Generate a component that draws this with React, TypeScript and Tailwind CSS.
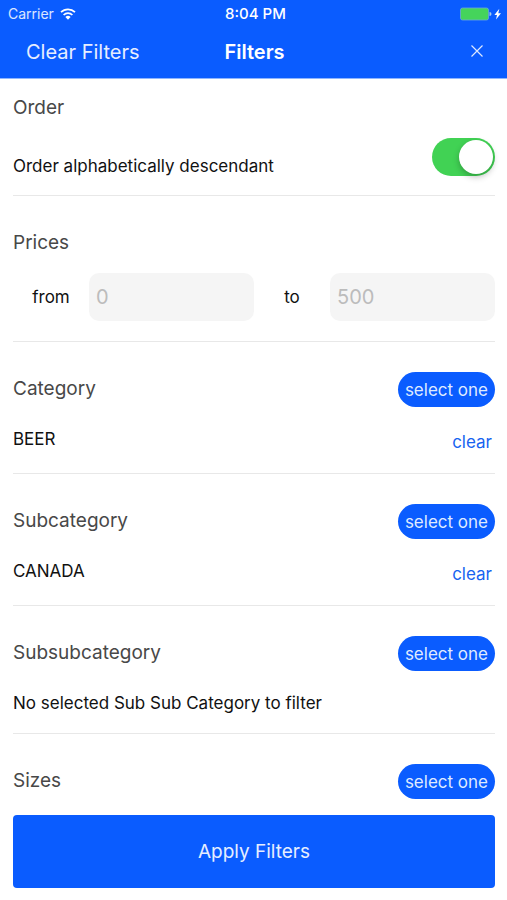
import { useState } from "react";
import type { ReactNode } from "react";

function StatusBar() {
  return (
    <div className="grid h-7 grid-cols-3 items-center pr-1 pl-2 leading-4">
      <div className="flex items-center gap-1.5 text-white/85">
        <span className="text-sm leading-4">Carrier</span>
        <svg width="16" height="12" viewBox="0 0 16 12" fill="none" stroke="#fff" strokeWidth="1.7" aria-hidden="true">
          <path d="M1 4.2a10 10 0 0 1 14 0" />
          <path d="M3.6 7a6.2 6.2 0 0 1 8.8 0" />
          <path d="M8 11.8 5.4 9.1a3.7 3.7 0 0 1 5.2 0Z" fill="#fff" stroke="none" />
        </svg>
      </div>
      <span className="text-center text-[15px] leading-4 font-medium">8:04 PM</span>
      <svg className="justify-self-end" width="43" height="14" viewBox="0 0 43 14" aria-hidden="true">
        <rect x="0.5" y="1" width="28" height="12" rx="2" fill="#45d45b" stroke="#6aa8d8" strokeWidth="0.8" />
        <path d="M29.5 5a2 2 0 0 1 0 4Z" fill="#a9cbe8" />
        <path d="M39.3 1.8 34.4 8h2.6l-1 4.4L41 6.2h-2.7Z" fill="#fff" />
      </svg>
    </div>
  );
}

function Section({ title, action, children }: { title: string; action?: ReactNode; children?: ReactNode }) {
  return (
    <section className="border-b border-[#e8e8e8] pt-[30px] first:pt-3 last:border-b-0">
      <div className="flex h-[35px] items-center justify-between">
        <h2 className="pb-0.5 text-[19px] leading-6 text-[#484848]">{title}</h2>
        {action}
      </div>
      {children}
    </section>
  );
}

function SelectButton({ label }: { label: string }) {
  return (
    <button
      type="button"
      aria-label={`${label}: select one`}
      className="h-[35px] rounded-full bg-[#0a5cff] px-[7px] text-[17px] leading-6 text-[#dfeaff]"
    >
      select one
    </button>
  );
}

function PriceField({ id, label, placeholder }: { id: string; label: string; placeholder: string }) {
  return (
    <div className="flex flex-1 items-center">
      <label htmlFor={id} className="w-[76px] text-center text-[17px] leading-6">
        {label}
      </label>
      <input
        id={id}
        inputMode="numeric"
        placeholder={placeholder}
        className="h-12 w-0 flex-1 rounded-[10px] bg-[#f5f5f5] px-[7px] text-xl outline-none placeholder:text-[#bcbcbc]"
      />
    </div>
  );
}

function SelectedSection({ title, initial }: { title: string; initial: string }) {
  const [value, setValue] = useState(initial);
  return (
    <Section title={title} action={<SelectButton label={title} />}>
      <div className="mt-5 mb-[19px] flex h-[27px] items-start justify-between">
        <span className="text-[17px] leading-6">{value}</span>
        <button
          type="button"
          onClick={() => setValue("")}
          className="self-end px-[3px] text-[17px] leading-6 text-[#1763f0]"
        >
          clear
        </button>
      </div>
    </Section>
  );
}

export default function App() {
  const [descending, setDescending] = useState(true);
  return (
    <div className="flex min-h-screen flex-col bg-white font-['Inter','Liberation_Sans',sans-serif] text-[#111]">
      <header className="border-b border-[#8fb6ff] bg-[#0a5cff] text-white">
        <StatusBar />
        <nav className="grid h-[50px] grid-cols-[1fr_auto_1fr] items-center pr-6 pb-0.5 pl-[26px]">
          <button type="button" className="justify-self-start text-xl leading-6 text-[#e6eeff]">
            Clear Filters
          </button>
          <h1 className="text-xl leading-6 font-semibold">Filters</h1>
          <button type="button" aria-label="Close" className="justify-self-end pb-0.5">
            <svg width="12" height="12" viewBox="0 0 12 12" stroke="#dce8ff" strokeWidth="1.2" aria-hidden="true">
              <path d="M0.5 0.5l11 11M11.5 0.5l-11 11" />
            </svg>
          </button>
        </nav>
      </header>

      <main className="flex-1 pr-3 pl-[13px]">
        <Section title="Order">
          <div className="mt-3 mb-[19px] flex h-[38px] items-start justify-between">
            <label htmlFor="descending" className="pt-4 text-[17px] leading-6">
              Order alphabetically descendant
            </label>
            <input
              id="descending"
              type="checkbox"
              role="switch"
              checked={descending}
              onChange={(e) => setDescending(e.target.checked)}
              className="h-[38px] w-[63px] appearance-none rounded-full bg-[#d8d8d8] p-0.5 before:block before:size-[34px] before:rounded-full before:bg-white before:shadow-[0_3px_6px_rgba(0,0,0,0.25)] before:content-[''] checked:bg-[#41d254] checked:before:ml-[25px]"
            />
          </div>
        </Section>

        <Section title="Prices">
          <div className="mt-3 mb-5 flex">
            <PriceField id="price-from" label="from" placeholder="0" />
            <PriceField id="price-to" label="to" placeholder="500" />
          </div>
        </Section>

        <SelectedSection title="Category" initial="BEER" />
        <SelectedSection title="Subcategory" initial="CANADA" />

        <Section title="Subsubcategory" action={<SelectButton label="Subsubcategory" />}>
          <p className="mt-5 mb-[18px] text-[17px] leading-6">No selected Sub Sub Category to filter</p>
        </Section>

        <Section title="Sizes" action={<SelectButton label="Sizes" />} />
      </main>

      <footer className="sticky bottom-0 bg-white pt-4 pr-3 pb-3 pl-[13px]">
        <button type="button" className="h-[73px] w-full rounded bg-[#0a5cff] text-[19px] leading-6 text-[#e6eeff]">
          Apply Filters
        </button>
      </footer>
    </div>
  );
}
